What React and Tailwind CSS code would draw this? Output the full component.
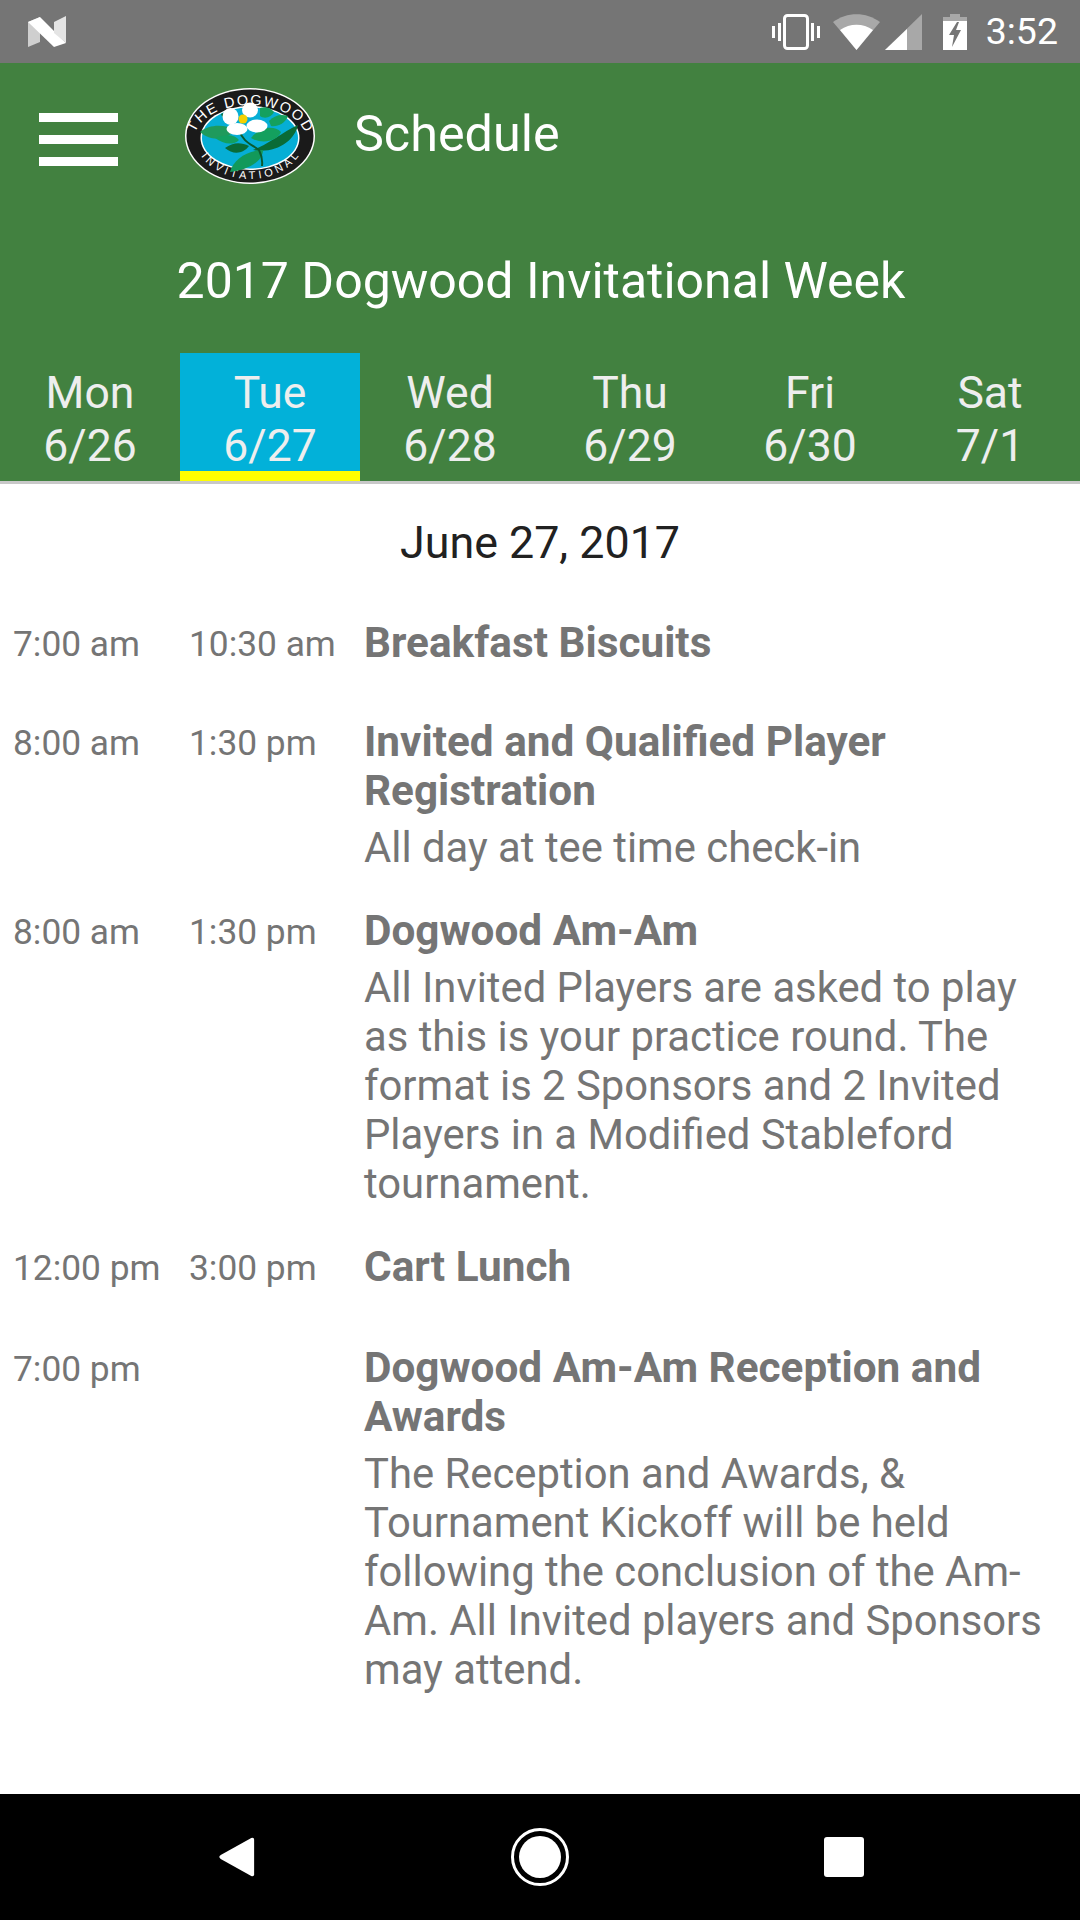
const days = [
  ['Mon', '6/26'],
  ['Tue', '6/27'],
  ['Wed', '6/28'],
  ['Thu', '6/29'],
  ['Fri', '6/30'],
  ['Sat', '7/1'],
]

const events = [
  { start: '7:00 am', end: '10:30 am', title: ['Breakfast Biscuits'], height: 'h-[99px]' },
  { start: '8:00 am', end: '1:30 pm', title: ['Invited and Qualified Player', 'Registration'], lines: ['All day at tee time check-in'] },
  {
    start: '8:00 am',
    end: '1:30 pm',
    title: ['Dogwood Am-Am'],
    lines: [
      'All Invited Players are asked to play',
      'as this is your practice round. The',
      'format is 2 Sponsors and 2 Invited',
      'Players in a Modified Stableford',
      'tournament.',
    ],
  },
  { start: '12:00 pm', end: '3:00 pm', title: ['Cart Lunch'], height: 'h-[101px]' },
  {
    start: '7:00 pm',
    end: '',
    title: ['Dogwood Am-Am Reception and', 'Awards'],
    lines: [
      'The Reception and Awards, &',
      'Tournament Kickoff will be held',
      'following the conclusion of the Am-',
      'Am. All Invited players and Sponsors',
      'may attend.',
    ],
  },
]

function NougatLogo() {
  return (
    <svg width="38" height="31" viewBox="0 0 38 31">
      <polygon points="0,6 12,1 12,26 0,31" fill="#cfcfcf" />
      <polygon points="0,6 12,1 38,27 26,31" fill="#ffffff" />
      <polygon points="26,6 38,0 38,27 26,17" fill="#e4e4e4" />
    </svg>
  )
}

function StatusIcons() {
  return (
    <div className="flex items-center">
      {/* vibrate */}
      <svg width="48" height="36" viewBox="0 0 48 36" className="mr-[13px]">
        <rect x="12.5" y="1.5" width="23" height="33" rx="3" fill="none" stroke="#fff" strokeWidth="3" />
        <rect x="6" y="9" width="3" height="18" fill="#fff" />
        <rect x="0" y="12" width="3" height="12" fill="#fff" />
        <rect x="39" y="9" width="3" height="18" fill="#fff" />
        <rect x="45" y="12" width="3" height="12" fill="#fff" />
      </svg>
      {/* wifi */}
      <svg width="47" height="36" viewBox="0 0 47 36">
        <path d="M0 8 C14 -2.5 33 -2.5 47 8 L23.5 36 Z" fill="#a8a8a8" />
        <path d="M7 16 C17 9 30 9 40 16 L23.5 36 Z" fill="#fff" />
      </svg>
      {/* signal */}
      <svg width="37" height="36" viewBox="0 0 37 36" className="ml-[5px]">
        <polygon points="0,36 37,0 37,36" fill="#a8a8a8" />
        <polygon points="0,36 22,15 22,36" fill="#fff" />
      </svg>
      {/* battery charging */}
      <svg width="24" height="36" viewBox="0 0 24 36" className="ml-[21px]">
        <path d="M7 0 H17 V3 H24 V36 H0 V3 H7 Z" fill="#fff" />
        <path d="M7 0 H17 V3 H24 V7 H0 V3 H7 Z" fill="#a8a8a8" />
        <polygon points="14,8 6,21 11,21 9,33 18,16 13,16 16,8" fill="#757575" />
      </svg>
    </div>
  )
}

function DogwoodLogo() {
  return (
    <svg width="130" height="96" viewBox="0 0 130 96">
      <ellipse cx="65" cy="48" rx="65" ry="48" fill="#fff" />
      <ellipse cx="65" cy="48" rx="63.5" ry="46.5" fill="#1a1a1a" />
      <ellipse cx="65" cy="50" rx="49.5" ry="32" fill="#fff" />
      <ellipse cx="65" cy="50" rx="48" ry="30.5" fill="#06aed5" />
      <defs>
        <path id="logoTop" d="M9 52 A56 35 0 0 1 121 52" />
        <path id="logoBottom" d="M9 46 A56 45 0 0 0 121 46" />
      </defs>
      <text fill="#fff" fontSize="14.5" fontFamily="Liberation Sans, sans-serif">
        <textPath href="#logoTop" startOffset="50%" textAnchor="middle" textLength="130" lengthAdjust="spacing">THE DOGWOOD</textPath>
      </text>
      <text fill="#fff" fontSize="11" fontFamily="Liberation Sans, sans-serif">
        <textPath href="#logoBottom" startOffset="50%" textAnchor="middle" textLength="112" lengthAdjust="spacing">INVITATIONAL</textPath>
      </text>
      {/* leaves */}
      <path d="M75 20 C80 18 86 20 89 24 C86 30 79 31 75 28 Z" fill="#14a05e" />
      <path d="M84 33 C90 27 96 26 103 28 C100 36 92 39 86 38 Z" fill="#14a05e" />
      <path d="M15 44 C24 36 40 36 50 42 C42 52 26 54 15 44 Z" fill="#1f9a5c" />
      <path d="M36 26 C42 22 48 26 50 32 C44 34 38 32 36 26 Z" fill="#0a6b36" />
      <path d="M68 62 C80 58 98 44 113 37 C110 52 92 66 68 62 Z" fill="#0a6b36" />
      <path d="M66 50 C74 40 88 36 96 44 C92 54 76 56 66 50 Z" fill="#14a05e" />
      <path d="M40 60 C48 54 56 54 64 58 C58 66 48 67 40 60 Z" fill="#0a6b36" />
      <path d="M30 50 C40 46 50 46 54 52 C48 58 38 56 30 50 Z" fill="#12a060" />
      <path d="M45 84 C48 72 62 62 78 62 C78 74 62 82 45 84 Z" fill="#12995a" />
      <path d="M54 42 C58 54 66 56 74 62 C76 66 78 70 77 78" fill="none" stroke="#0a5a2e" strokeWidth="2" />
      {/* flower */}
      <ellipse cx="45.5" cy="28.5" rx="8" ry="8.5" fill="#fff" />
      <ellipse cx="65" cy="22" rx="8" ry="7.5" fill="#fff" />
      <ellipse cx="72" cy="38" rx="10.5" ry="6.5" fill="#fff" />
      <ellipse cx="52" cy="41" rx="10.5" ry="6" fill="#fff" />
      <circle cx="58" cy="31" r="4.5" fill="#f4d000" />
    </svg>
  )
}

function EventRow({ event }) {
  return (
    <div className={`flex pl-[13px] ${event.height || 'pb-[34px]'}`}>
      <div className="w-[176px] shrink-0 pt-[2px] text-[35.3px] leading-[49px] text-[#757575]">{event.start}</div>
      <div className="w-[175px] shrink-0 pt-[2px] text-[35.3px] leading-[49px] text-[#757575]">{event.end}</div>
      <div className="flex-1 text-[41.8px] leading-[49px] text-[#757575]">
        <div className="font-bold mb-2 text-[42.3px]">
          {event.title.map((t) => (
            <div key={t} className="whitespace-nowrap">{t}</div>
          ))}
        </div>
        {event.lines && event.lines.map((t) => (
          <div key={t} className="whitespace-nowrap">{t}</div>
        ))}
      </div>
    </div>
  )
}

export default function App() {
  return (
    <div className="w-[1080px] h-[1920px] flex flex-col bg-white overflow-hidden font-['Roboto',sans-serif]">
      {/* status bar */}
      <div className="h-[63px] bg-[#757575] flex items-center justify-between pl-[28px] pr-[22px] shrink-0">
        <NougatLogo />
        <div className="flex items-center">
          <StatusIcons />
          <span className="ml-[19px] text-[37.5px] text-white leading-none">3:52</span>
        </div>
      </div>

      {/* header */}
      <div className="bg-[#428140] h-[418px] shrink-0 flex flex-col">
        <div className="flex items-center h-[146px] pl-[39px]">
          <div className="w-[79px] flex flex-col gap-[13px] mt-[7px]">
            <div className="h-[9px] bg-white" />
            <div className="h-[9px] bg-white" />
            <div className="h-[9px] bg-white" />
          </div>
          <div className="ml-[67px]"><DogwoodLogo /></div>
          <div className="ml-[39px] mb-[4px] text-[50.3px] text-white">Schedule</div>
        </div>
        <div className="flex-1 flex items-center justify-center pl-[2px] pt-[1px] text-[50px] text-white">
          2017 Dogwood Invitational Week
        </div>
        <div className="flex h-[128px]">
          {days.map(([d, n], i) => (
            <div
              key={d}
              className={`w-[180px] h-full flex flex-col items-center pt-[14px] text-[44.5px] leading-[53px] text-[#eeeeee] ${i === 1 ? 'bg-[#02b1d9] border-b-[10px] border-[#ffff00]' : ''}`}
            >
              <div>{d}</div>
              <div>{n}</div>
            </div>
          ))}
        </div>
      </div>
      <div className="h-[3px] bg-[#c8c8c8] shrink-0" />

      {/* list */}
      <div className="flex-1">
        <div className="text-center text-[44.8px] leading-[50px] text-[#212121] pt-[34px] pb-[50px]">June 27, 2017</div>
        {events.map((e) => (
          <EventRow key={e.title[0]} event={e} />
        ))}
      </div>

      {/* nav bar */}
      <div className="h-[126px] bg-black shrink-0 flex items-center justify-between pl-[217px] pr-[216px]">
        <svg width="38" height="42" viewBox="0 0 38 44">
          <path d="M35 2 L3 20 Q0 22 3 24 L35 42 Q38 43 38 40 L38 4 Q38 1 35 2 Z" fill="#fff" />
        </svg>
        <svg width="58" height="58" viewBox="0 0 58 58">
          <circle cx="29" cy="29" r="27.5" fill="none" stroke="#fff" strokeWidth="3" />
          <circle cx="29" cy="29" r="21" fill="#fff" />
        </svg>
        <div className="w-[40px] h-[40px] bg-white rounded-[3px]" />
      </div>
    </div>
  )
}
